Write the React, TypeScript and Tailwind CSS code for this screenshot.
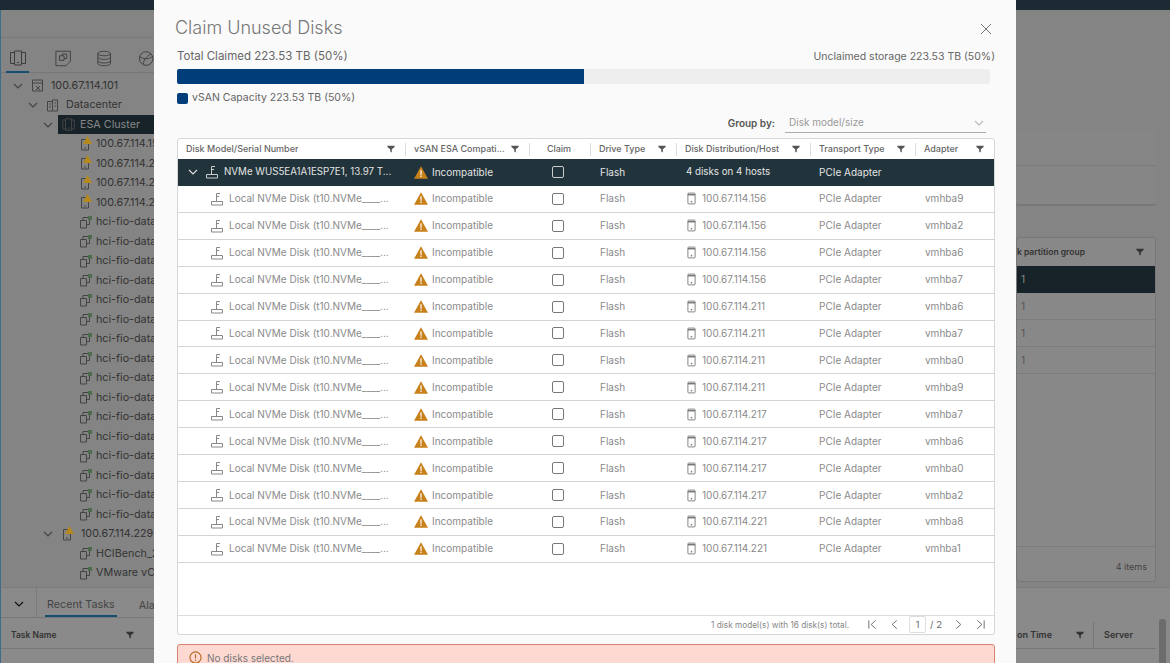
const rows = [
  ["100.67.114.156", "vmhba9"],
  ["100.67.114.156", "vmhba2"],
  ["100.67.114.156", "vmhba6"],
  ["100.67.114.156", "vmhba7"],
  ["100.67.114.211", "vmhba6"],
  ["100.67.114.211", "vmhba7"],
  ["100.67.114.211", "vmhba0"],
  ["100.67.114.211", "vmhba9"],
  ["100.67.114.217", "vmhba7"],
  ["100.67.114.217", "vmhba6"],
  ["100.67.114.217", "vmhba0"],
  ["100.67.114.217", "vmhba2"],
  ["100.67.114.221", "vmhba8"],
  ["100.67.114.221", "vmhba1"],
];

const hosts = ["100.67.114.156", "100.67.114.211", "100.67.114.217", "100.67.114.221"];
const vms = Array.from({ length: 16 }, (_, i) => `hci-fio-datastore-${i}`);

function Filter({ className = "text-[#555]" }: { className?: string }) {
  return (
    <svg viewBox="0 0 10 10" className={`h-[8px] w-[8px] shrink-0 ${className}`} fill="currentColor">
      <path d="M0.5 1h9v1.6L6 5.4V9.4L4 8.2V5.4L0.5 2.6z" />
    </svg>
  );
}

function Chevron({ className = "" }: { className?: string }) {
  return (
    <svg viewBox="0 0 10 10" className={`h-[10px] w-[10px] shrink-0 ${className}`} fill="none" stroke="currentColor" strokeWidth="1.2">
      <path d="M1 3l4 4 4-4" />
    </svg>
  );
}

function DiskIcon({ className = "" }: { className?: string }) {
  return (
    <svg viewBox="0 0 12 14" className={`h-[14px] w-[12px] shrink-0 ${className}`} fill="none" stroke="currentColor" strokeWidth="1">
      <path d="M5.5 9V1.5H9M5.5 4.5h2.6" />
      <path d="M0.5 9.5h11v3.5h-11z" />
    </svg>
  );
}

function HostIcon({ className = "" }: { className?: string }) {
  return (
    <svg viewBox="0 0 10 14" className={`h-[13px] w-[9px] shrink-0 ${className}`} fill="none" stroke="currentColor" strokeWidth="1">
      <rect x="1" y="1" width="8" height="12" rx="0.8" />
      <path d="M1 2.8h8" strokeWidth="1.6" />
      <path d="M4.2 10.5h1.6" strokeWidth="1.6" />
    </svg>
  );
}

function Warning() {
  return (
    <svg viewBox="0 0 14 13" className="h-[13px] w-[14px] shrink-0">
      <path d="M7 0.2L14 12.8H0z" fill="#c8811a" />
      <path d="M6.4 4.2h1.2v4.6H6.4zM6.4 9.6h1.2v1.4H6.4z" fill="#fff" />
    </svg>
  );
}

function TreeIcon({ kind }: { kind: "vc" | "dc" | "cluster" | "host" | "vm" }) {
  return (
    <span className="relative h-[13px] w-[13px] shrink-0">
      <svg viewBox="0 0 13 13" className="h-[13px] w-[13px] text-[#444]" fill="none" stroke="currentColor" strokeWidth="1">
        {kind === "vc" && <path d="M1.5 1h10v11h-10zM1.5 4h10M5 7l4 4M9 7l-4 4" />}
        {kind === "dc" && <path d="M1.5 2.5h5v9.5h-5zM6.5 1h5v11h-5zM3 5h2M3 8h2M8.5 4h1.5M8.5 7h1.5" />}
        {kind === "cluster" && <path d="M3 2H0.8v9H3M10 2h2.2v9H10M3.5 0.8h6v11.4h-6zM5.5 10h2" />}
        {kind === "host" && <path d="M2.5 1.5h7v10.5h-7zM5 10h2" />}
        {kind === "vm" && <path d="M1.5 4.5h6v7.5h-6zM4 4.5V1.5h6.5v7H7.5" />}
      </svg>
      {kind === "host" && (
        <svg viewBox="0 0 9 8" className="absolute -top-[2px] left-[4px] h-[8px] w-[9px]">
          <path d="M4.5 0l4.5 8H0z" fill="#b5881e" />
        </svg>
      )}
      {kind === "vm" && <span className="absolute right-0 top-0 h-[4px] w-[4px] bg-[#4d6b4d]" />}
    </span>
  );
}

type TreeRowProps = {
  label: string;
  indent: string;
  kind: "vc" | "dc" | "cluster" | "host" | "vm";
  chevron?: boolean;
  selected?: boolean;
};

function TreeRow({ label, indent, kind, chevron, selected }: TreeRowProps) {
  return (
    <div className={`flex h-[19.5px] items-center whitespace-nowrap text-[10.75px] text-[#333] ${indent}`}>
      {chevron ? <Chevron className="mr-[8px] text-[#444]" /> : <span className="w-[18px] shrink-0" />}
      <span
        className={`flex h-[19px] items-center ${chevron ? "gap-[7px]" : "gap-[4px]"} ${
          selected ? "-ml-[3px] gap-[5px]! bg-[#172329] pl-[4px] pr-[40px] text-[#888]" : ""
        }`}
      >
        <TreeIcon kind={kind} />
        {label}
      </span>
    </div>
  );
}

function Background() {
  return (
    <div className="flex h-[663px] w-[1170px] flex-col overflow-hidden bg-[#848484]">
      <div className="h-[10px] shrink-0 bg-[#1b2a33]" />
      <div className="flex min-h-0 flex-1 justify-between border-l border-[#3d6d88]">
        <div className="w-[153px]">
          <div className="h-[28px] border-b border-[#7a7a7a]" />
          <div className="flex h-[35px] items-center gap-[26px] border-b border-[#777] pl-[5px] pt-[7px] text-[#3c3c3c]">
            <span className="flex h-[28px] w-[24px] items-center justify-center border-b-2 border-[#14506f]">
              <svg viewBox="0 0 18 16" className="h-[16px] w-[18px]" fill="none" stroke="currentColor" strokeWidth="1"><path d="M5 2.5H1.5v11H5M13 2.5h3.5v11H13M5.5 1h7v14h-7zM8 12.5h2" /></svg>
            </span>
            <svg viewBox="0 0 18 18" className="h-[17px] w-[17px]" fill="none" stroke="currentColor" strokeWidth="1"><path d="M1 1h16v11l-5 5H1zM5 6h5v5H5zM8 6V4h5v5h-3" /></svg>
            <svg viewBox="0 0 16 18" className="h-[17px] w-[15px]" fill="none" stroke="currentColor" strokeWidth="1"><ellipse cx="8" cy="3.5" rx="7" ry="2.5" /><path d="M1 3.5v11c0 1.4 3 2.5 7 2.5s7-1.1 7-2.5v-11M1 7.5c0 1.4 3 2.5 7 2.5s7-1.1 7-2.5M1 11.5c0 1.4 3 2.5 7 2.5s7-1.1 7-2.5" /></svg>
            <svg viewBox="0 0 18 18" className="h-[17px] w-[17px]" fill="none" stroke="currentColor" strokeWidth="1"><circle cx="9" cy="9" r="7.5" /><path d="M2 7c4 3 9 3 14 0M6 15c0-4 3-8 8-11" /></svg>
          </div>
          <div className="pt-[3px]">
            <TreeRow label="100.67.114.101" indent="pl-[12px]" chevron kind="vc" />
            <TreeRow label="Datacenter" indent="pl-[27px]" chevron kind="dc" />
            <TreeRow label="ESA Cluster" indent="pl-[42px]" chevron selected kind="cluster" />
            {hosts.map((h) => (
              <TreeRow key={h} label={h} indent="pl-[60px]" kind="host" />
            ))}
            {vms.map((v) => (
              <TreeRow key={v} label={v} indent="pl-[60px]" kind="vm" />
            ))}
            <TreeRow label="100.67.114.229" indent="pl-[42px]" chevron kind="host" />
            <TreeRow label="HCIBench_2.8.2" indent="pl-[60px]" kind="vm" />
            <TreeRow label="VMware vCenter" indent="pl-[60px]" kind="vm" />
          </div>
        </div>

        <div className="w-[154px] shrink-0 pt-[120px]">
          <div className="mr-[14px] h-[76px] rounded-[3px] border-b-2 border-[#777] bg-[#868686]">
            <div className="h-[36px] border-b border-[#7c7c7c]" />
          </div>
          <div className="mr-[14px] mt-[31px] h-[345px] rounded-[3px] border border-[#787878] bg-[#888]">
            <div className="flex h-[28px] items-center justify-between pr-[11px] text-[8.5px] font-semibold text-[#333]">
              <span className="whitespace-nowrap">k partition group</span>
              <Filter className="text-[#333]" />
            </div>
            <div className="flex h-[27px] items-center bg-[#172329] pl-[4px] text-[10px] text-[#888]">1</div>
            <div className="flex h-[27px] items-center border-b border-[#7c7c7c] pl-[4px] text-[10px] text-[#555]">1</div>
            <div className="flex h-[27px] items-center border-b border-[#7c7c7c] pl-[4px] text-[10px] text-[#555]">1</div>
            <div className="flex h-[27px] items-center border-b border-[#7c7c7c] pl-[4px] text-[10px] text-[#555]">1</div>
            <div className="mt-[172px] flex h-[35px] items-center justify-end border-t border-[#7c7c7c] pr-[8px] pt-[6px] text-[9px] text-[#444]">4 items</div>
          </div>
        </div>
      </div>

      <div className="flex h-[76px] shrink-0 justify-between border-l border-t border-[#3d6d88] border-t-[#7b7b7b] bg-[#8a8a8a]">
        <div className="w-[153px]">
          <div className="flex h-[30px] items-stretch border-b border-[#777]">
            <span className="flex w-[36px] shrink-0 items-center justify-center border-r border-[#7b7b7b] pt-[3px]"><Chevron className="text-[#111]" /></span>
            <span className="ml-[8px] flex items-center whitespace-nowrap border-b-2 border-[#14506f] px-[2px] pt-[8px] text-[10.75px] text-[#444]">Recent Tasks</span>
            <span className="ml-[22px] flex items-center pt-[8px] text-[10.75px] text-[#444]">Alarms</span>
          </div>
          <div className="flex h-[31px] items-center justify-between border-b border-[#777] pl-[10px] pr-[20px] pt-[4px] text-[8.5px] font-semibold text-[#333]">
            Task Name
            <Filter className="text-[#333]" />
          </div>
        </div>
        <div className="flex w-[154px] shrink-0 pt-[30px]">
          <div className="flex h-[31px] flex-1 items-center justify-between border-b border-[#777] pt-[3px] text-[9px] font-semibold text-[#333]">
            <span className="whitespace-nowrap pl-px">on Time</span>
            <span className="flex items-center gap-[9px]">
              <Filter className="text-[#333]" />
              <span className="border-l border-[#777] py-[6px] pl-[10px] pr-[23px]">Server</span>
            </span>
          </div>
          <div className="ml-[3px] mr-[4px] mt-[1px] w-[7px] rounded-t-[3px] bg-[#6c6c6c]" />
        </div>
      </div>
    </div>
  );
}

function HeaderCell({ label, filter = true, center }: { label: string; filter?: boolean; center?: boolean }) {
  return (
    <div className={`flex h-[13px] items-center border-r border-[#ddd] pl-[8px] pr-[10px] last:border-r-0 ${center ? "justify-center pl-0 pr-0" : "justify-between"}`}>
      <span className="truncate">{label}</span>
      {filter && <Filter />}
    </div>
  );
}

function Checkbox({ dark }: { dark?: boolean }) {
  return (
    <span className={`h-[12px] w-[12px] rounded-[2px] border ${dark ? "border-[#ccc] bg-[#21333b]" : "border-[#777] bg-white"}`} />
  );
}

const gridCols = "grid-cols-[228px_124px_61px_86px_134px_105px_1fr]";

function Modal() {
  return (
    <div className="absolute bottom-0 left-[154px] top-0 w-[862px] overflow-hidden bg-[#fafafa] pl-[23px] pr-[21px] text-[10px]">
      <div className="flex h-[46px] items-center justify-between">
        <h1 className="-ml-[2px] pt-[9px] text-[18px] font-light text-[#777]">Claim Unused Disks</h1>
        <svg viewBox="0 0 12 12" className="mr-[3px] mt-[12px] h-[12px] w-[12px] text-[#777]" fill="none" stroke="currentColor" strokeWidth="1">
          <path d="M1 1l10 10M11 1L1 11" />
        </svg>
      </div>
      <div className="flex h-[22px] items-center justify-between text-[#666]">
        <span className="text-[11.5px]">Total Claimed 223.53 TB (50%)</span>
        <span className="text-[10.5px]">Unclaimed storage 223.53 TB (50%)</span>
      </div>
      <div className="mr-[5px] mt-[1px] h-[15px] overflow-hidden rounded-[2px] bg-[#eeeeee]">
        <div className="h-full w-1/2 bg-[#003d79]" />
      </div>
      <div className="mt-[8px] flex h-[12px] items-center gap-[4px] text-[10.5px] text-[#666]">
        <span className="h-[11px] w-[11px] rounded-[2px] bg-[#003d79]" />
        vSAN Capacity 223.53 TB (50%)
      </div>
      <div className="mt-[7px] flex h-[24px] items-center justify-end pr-[9px]">
        <span className="mr-[10px] text-[10px] font-semibold text-[#555]">Group by:</span>
        <div className="flex h-[20px] w-[201px] items-center justify-between border-b border-[#aaa] pl-[4px] pr-[2px] text-[#999]">
          Disk model/size
          <Chevron className="h-[8px] w-[8px] text-[#bbb]" />
        </div>
      </div>

      <div className="mt-[3px] rounded-[3px] border border-[#d7d7d7] bg-white">
        <div className={`grid h-[20px] ${gridCols} items-center text-[9px] font-medium text-[#666]`}>
          <HeaderCell label="Disk Model/Serial Number" />
          <HeaderCell label="vSAN ESA Compati..." />
          <HeaderCell label="Claim" filter={false} center />
          <HeaderCell label="Drive Type" />
          <HeaderCell label="Disk Distribution/Host" />
          <HeaderCell label="Transport Type" />
          <HeaderCell label="Adapter" />
        </div>
        <div className={`grid h-[26.93px] ${gridCols} items-center bg-[#21333b] text-[#e4e4e4]`}>
          <div className="flex items-center pl-[10px]">
            <Chevron className="mr-[8px] text-[#ddd]" />
            <DiskIcon className="mr-[6px] text-[#ccc]" />
            <span className="whitespace-nowrap text-[9.75px]">NVMe WUS5EA1A1ESP7E1, 13.97 T...</span>
          </div>
          <div className="flex items-center gap-[4px] pl-[8px]">
            <Warning />
            Incompatible
          </div>
          <div className="flex justify-center pr-[5px]"><Checkbox dark /></div>
          <div className="pl-[9px]">Flash</div>
          <div className="pl-[9px] text-[9.75px]">4 disks on 4 hosts</div>
          <div className="pl-[8px]">PCIe Adapter</div>
          <div />
        </div>
        {rows.map(([host, adapter], i) => (
          <div key={i} className={`grid h-[26.93px] ${gridCols} items-center border-b border-[#d4d4d4] text-[#8a8a8a]`}>
            <div className="flex items-center pl-[33px]">
              <DiskIcon className="mr-[6px] text-[#888]" />
              <span className="whitespace-nowrap">Local NVMe Disk (t10.NVMe____...</span>
            </div>
            <div className="flex items-center gap-[4px] pl-[8px]">
              <Warning />
              Incompatible
            </div>
            <div className="flex justify-center pr-[5px]"><Checkbox /></div>
            <div className="pl-[9px]">Flash</div>
            <div className="flex items-center gap-[6px] pl-[10px]">
              <HostIcon className="text-[#777]" />
              {host}
            </div>
            <div className="pl-[8px]">PCIe Adapter</div>
            <div className="pl-[9px]">{adapter}</div>
          </div>
        ))}
        <div className="h-[53px] border-b border-[#ddd]" />
        <div className="flex h-[18px] items-center justify-end pr-[8px] text-[8.25px] text-[#888]">
          <span className="mr-[18px]">1 disk model(s) with 16 disk(s) total.</span>
          <span className="flex items-center gap-[11px] text-[#666]">
            <svg viewBox="0 0 12 12" className="h-[11px] w-[11px]" fill="none" stroke="currentColor" strokeWidth="1"><path d="M2 1.5v9M9.5 1.5L4.5 6l5 4.5" /></svg>
            <svg viewBox="0 0 12 12" className="h-[11px] w-[11px]" fill="none" stroke="currentColor" strokeWidth="1"><path d="M8.5 1.5L3.5 6l5 4.5" /></svg>
            <span className="-ml-[2px] flex items-center gap-[4px]">
              <span className="flex h-[17px] w-[17px] items-center justify-center rounded-[2px] border border-[#ddd] bg-white text-[9px]">1</span>
              <span className="text-[9.5px]">/ 2</span>
            </span>
            <svg viewBox="0 0 12 12" className="h-[11px] w-[11px]" fill="none" stroke="currentColor" strokeWidth="1"><path d="M3.5 1.5L8.5 6l-5 4.5" /></svg>
            <svg viewBox="0 0 12 12" className="h-[11px] w-[11px]" fill="none" stroke="currentColor" strokeWidth="1"><path d="M10 1.5v9M2.5 1.5L7.5 6l-5 4.5" /></svg>
          </span>
        </div>
      </div>

      <div className="mt-[9px] flex h-[40px] items-start gap-[5px] rounded-t-[3px] border border-[#d9826f] bg-[#fdd9d2] pl-[11px] pt-[6px] text-[#777]">
        <svg viewBox="0 0 14 14" className="h-[13px] w-[13px] text-[#b5651d]" fill="none" stroke="currentColor" strokeWidth="1.2">
          <circle cx="7" cy="7" r="6" />
          <path d="M7 3.5v4.5M7 9.4v1.4" />
        </svg>
        <span>No disks selected.</span>
      </div>
    </div>
  );
}

export default function App() {
  return (
    <div className="relative h-[663px] w-[1170px] overflow-hidden font-[family-name:Inter,sans-serif]">
      <Background />
      <Modal />
    </div>
  );
}
